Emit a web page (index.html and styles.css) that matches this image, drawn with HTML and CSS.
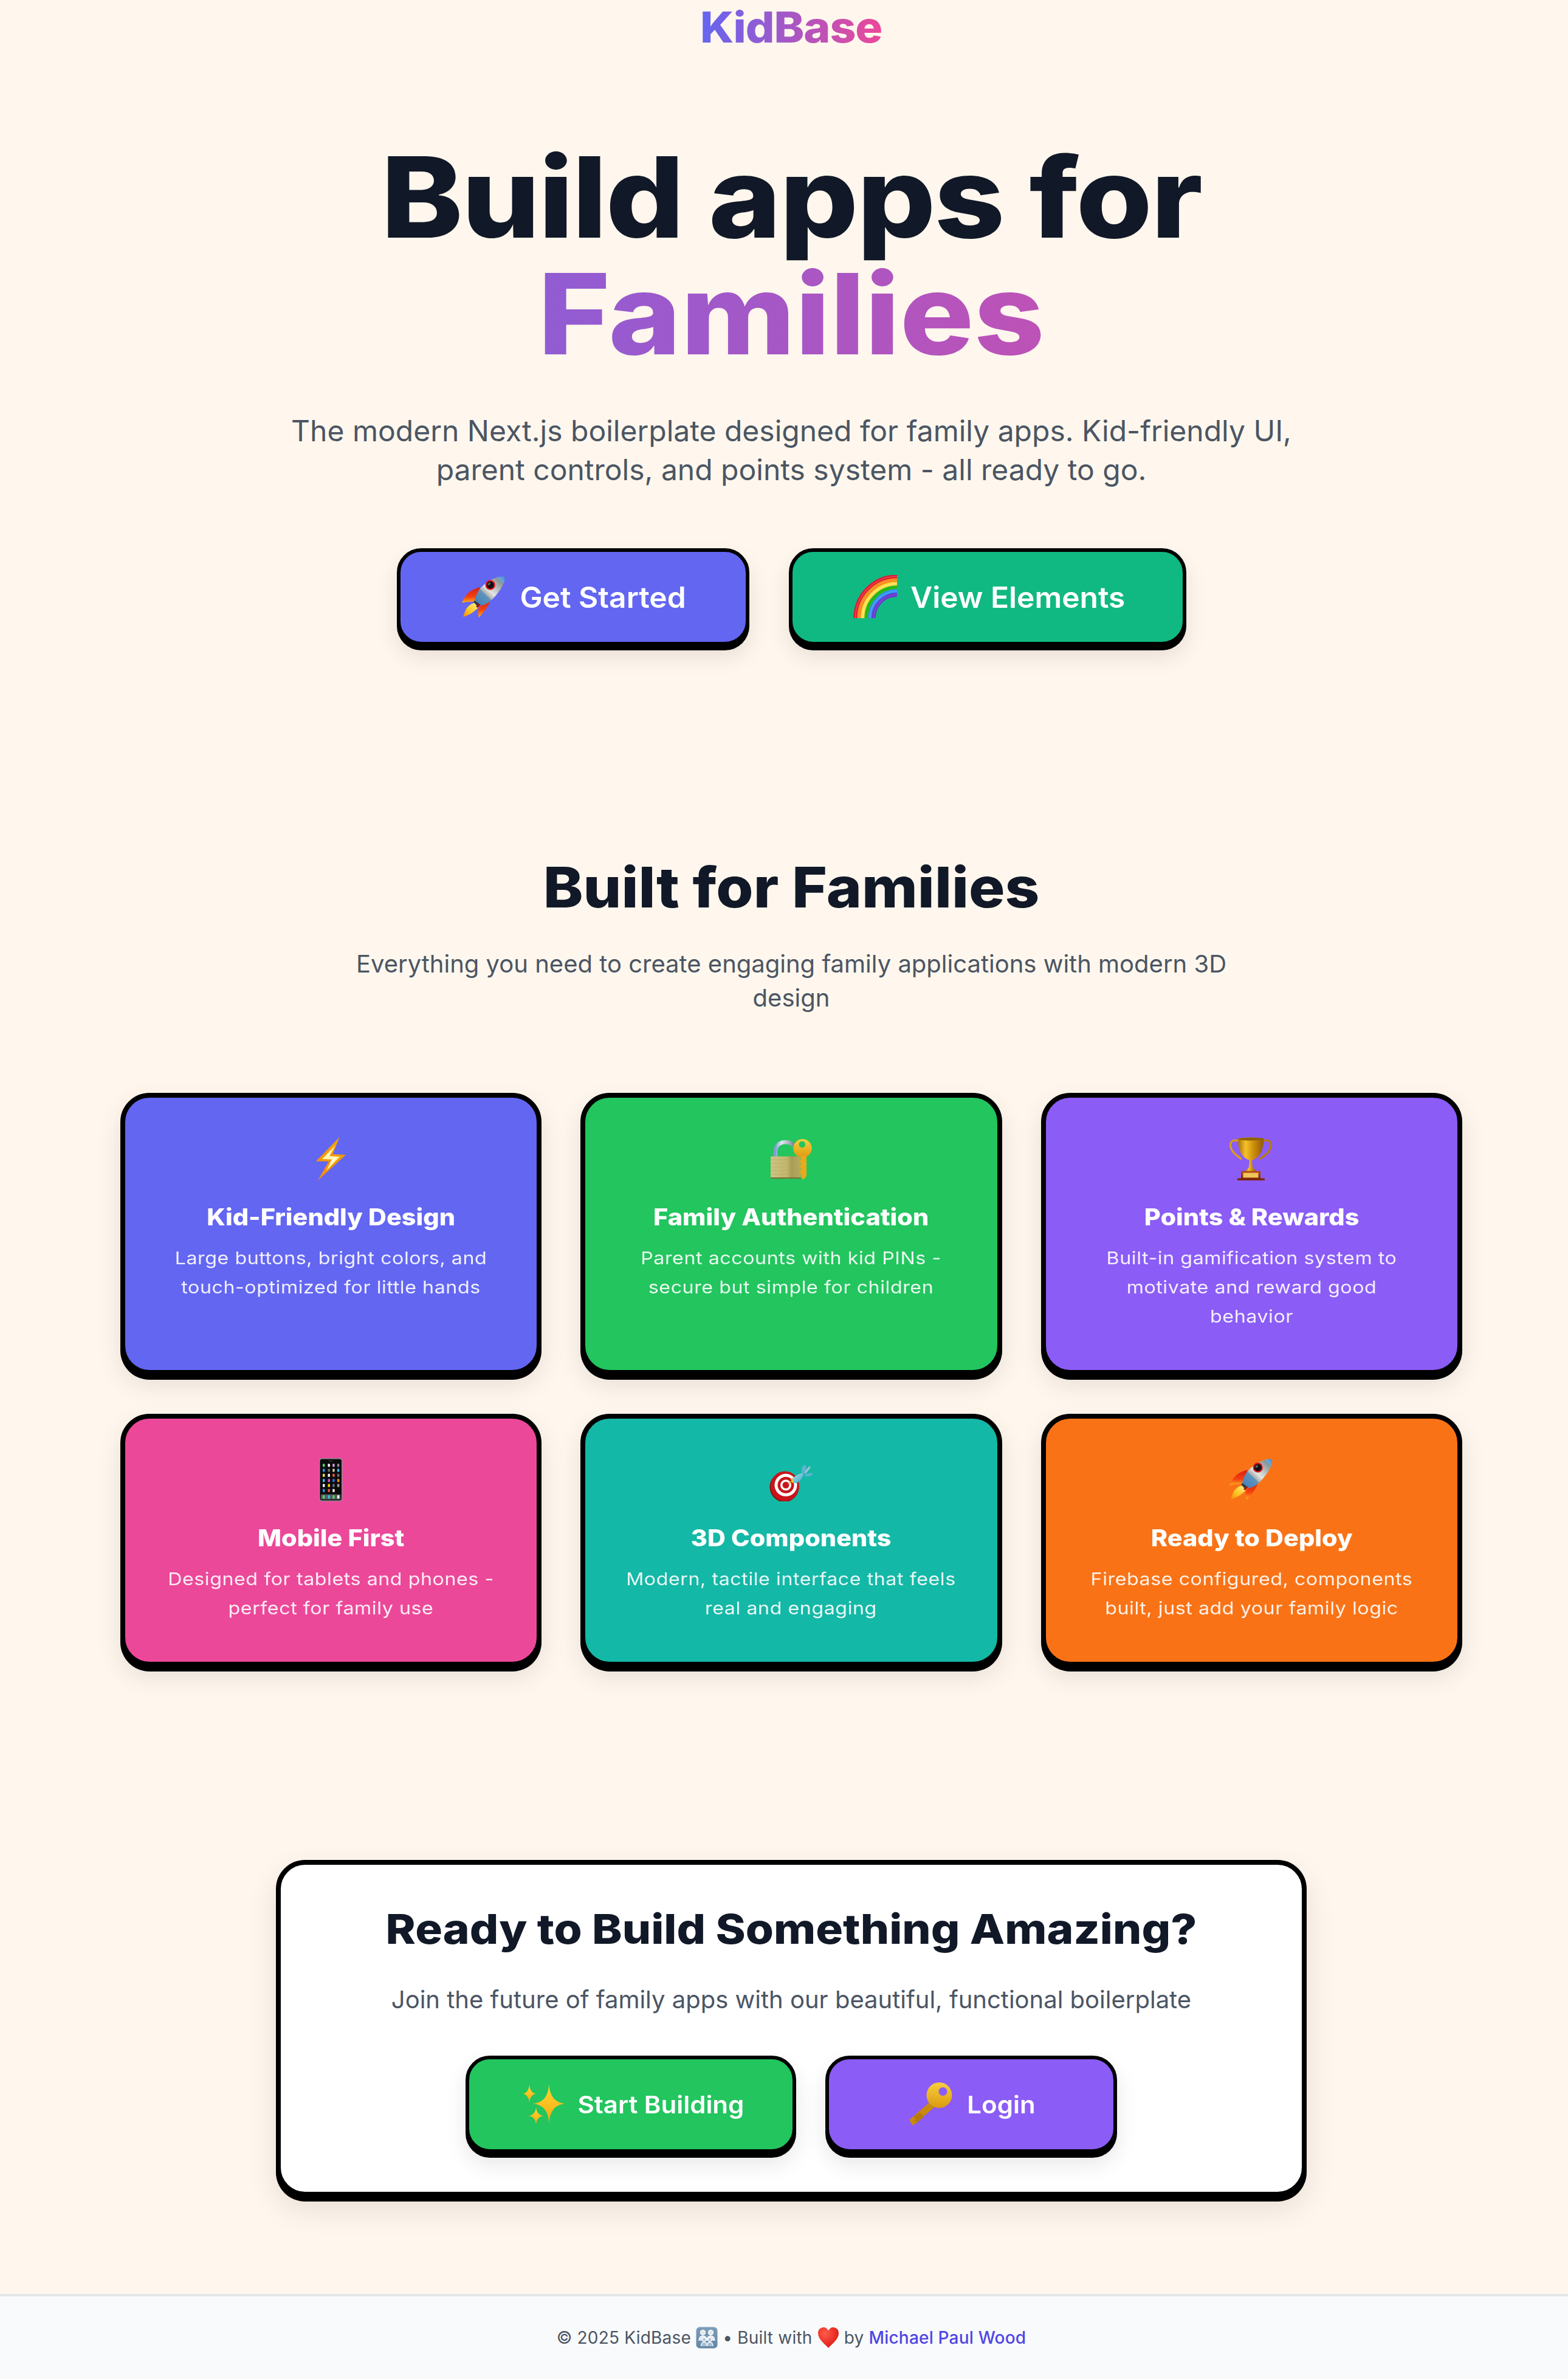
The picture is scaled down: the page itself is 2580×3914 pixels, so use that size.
FILE: index.html
```html
<!DOCTYPE html>
<html lang="en">
<head>
<meta charset="utf-8">
<title>KidBase</title>
<link rel="stylesheet" href="styles.css">
</head>
<body>
<svg class="defs" xmlns="http://www.w3.org/2000/svg" aria-hidden="true">
  <defs>
    <linearGradient id="rkShade" x1="0" y1="1" x2="1" y2="0">
      <stop offset="0" stop-color="#3e7fb8"/><stop offset=".36" stop-color="#5f93bd"/><stop offset=".38" stop-color="#a8aeac"/><stop offset=".5" stop-color="#e3e5e2"/><stop offset=".85" stop-color="#8a9290"/><stop offset=".86" stop-color="#6fa8d8"/><stop offset="1" stop-color="#4d8cc4"/>
    </linearGradient>
    <linearGradient id="rkFin" x1="0" y1="0" x2="0" y2="1">
      <stop offset="0" stop-color="#d81f14"/><stop offset=".6" stop-color="#f5400f"/><stop offset="1" stop-color="#fdb022"/>
    </linearGradient>
    <linearGradient id="rkFire" x1="1" y1="0" x2="0" y2="1">
      <stop offset="0" stop-color="#fff48a"/><stop offset=".6" stop-color="#fdc31f"/><stop offset="1" stop-color="#f5840f"/>
    </linearGradient>
    <linearGradient id="boltFill" x1="0" y1="0" x2="0" y2="1">
      <stop offset="0" stop-color="#f7a20c"/><stop offset="1" stop-color="#f48c06"/>
    </linearGradient>
    <linearGradient id="gold" x1="0" y1="0" x2="1" y2="0">
      <stop offset="0" stop-color="#a86f05"/><stop offset=".3" stop-color="#f3c22c"/><stop offset=".6" stop-color="#cf8f0c"/><stop offset="1" stop-color="#8f5b04"/>
    </linearGradient>
    <linearGradient id="plinth" x1="0" y1="0" x2="0" y2="1">
      <stop offset="0" stop-color="#b3501a"/><stop offset="1" stop-color="#7d2a08"/>
    </linearGradient>
    <linearGradient id="brass" x1="0" y1="0" x2="1" y2="0">
      <stop offset="0" stop-color="#cfc483"/><stop offset=".55" stop-color="#c2b56c"/><stop offset=".7" stop-color="#a89c55"/><stop offset="1" stop-color="#b5a963"/>
    </linearGradient>
    <linearGradient id="steel" x1="0" y1="0" x2="1" y2="0">
      <stop offset="0" stop-color="#7f9fd2"/><stop offset=".3" stop-color="#e3e8f0"/><stop offset=".7" stop-color="#a5acb8"/><stop offset="1" stop-color="#6c7480"/>
    </linearGradient>
    <linearGradient id="keyGold" x1="0" y1="0" x2="0" y2="1">
      <stop offset="0" stop-color="#f7cf3c"/><stop offset="1" stop-color="#dc9a12"/>
    </linearGradient>
    <linearGradient id="dartBlue" x1="0" y1="0" x2="1" y2="1">
      <stop offset="0" stop-color="#a4e4ee"/><stop offset="1" stop-color="#3fa6c8"/>
    </linearGradient>
    <linearGradient id="star" x1="0" y1="0" x2="0" y2="1">
      <stop offset="0" stop-color="#fdd835"/><stop offset="1" stop-color="#f7a80d"/>
    </linearGradient>
    <linearGradient id="famBox" x1="0" y1="0" x2="0" y2="1">
      <stop offset="0" stop-color="#7f9db8"/><stop offset="1" stop-color="#5f86a8"/>
    </linearGradient>
    <radialGradient id="heartFill" cx=".35" cy=".3" r=".8">
      <stop offset="0" stop-color="#ff5a4a"/><stop offset="1" stop-color="#d9140f"/>
    </radialGradient>
  </defs>

  <symbol id="e-rocket" viewBox="0 0 72 72">
    <path d="M30 20 C22 22 16 25 11 29 C6 34 2 40 0 46 C6 44 14 44 22 44Z" fill="url(#rkFin)"/>
    <path d="M41 37 L46 45 C42 53 36 62 28 70 C26 64 26 58 28 54 L36 44Z" fill="url(#rkFin)"/>
    <path d="M22 46 L28 52 C22 60 12 66 2 69 C4 62 6 56 10 52 C14 48 18 46 22 46Z" fill="url(#rkFire)"/>
    <path d="M19 44 L24 40 L30 47 L25 51Z" fill="#33373d"/>
    <path d="M40 37 C36 43 31 49 26 54 L23 52 C28 47 34 41 40 37Z" fill="#a3160f"/>
    <path d="M70 3 C62 1 46 6 31 21 C26 27 22 36 21 42 L32 50 C40 49 46 44 52 38 C64 25 72 12 70 3Z" fill="url(#rkShade)"/>
    <circle cx="46.7" cy="16.5" r="8.2" fill="#e1131f"/>
    <circle cx="46.7" cy="16.5" r="6" fill="#111"/>
    <ellipse cx="44.8" cy="14.8" rx="2.8" ry="1.6" fill="#666" transform="rotate(-40 44.8 14.8)"/>
  </symbol>

  <symbol id="e-rainbow" viewBox="0 0 72 72">
    <g fill="none" stroke-width="6.3">
      <path d="M3.5 71 A68.500 68.500 0 0 1 72 2.500" stroke="#dd1c33"/>
      <path d="M9.500 71 A62.500 62.500 0 0 1 72 8.500" stroke="#f88618"/>
      <path d="M15.500 71 A56.500 56.500 0 0 1 72 14.500" stroke="#fddc4a"/>
      <path d="M21.500 71 A50.500 50.500 0 0 1 72 20.500" stroke="#2fbb1e"/>
      <path d="M27.500 71 A44.500 44.500 0 0 1 72 26.500" stroke="#2e8ff6"/>
      <path d="M33.500 71 A38.500 38.500 0 0 1 72 32.500" stroke="#6a35cc"/>
    </g>
    <g fill="none" stroke-width="1.200" stroke-opacity=".5">
      <path d="M3.500 71 A68.500 68.500 0 0 1 72 2.500" stroke="#ff8a96"/>
      <path d="M9.500 71 A62.500 62.500 0 0 1 72 8.500" stroke="#ffc06a"/>
      <path d="M15.500 71 A56.500 56.500 0 0 1 72 14.500" stroke="#fff3a0"/>
      <path d="M21.500 71 A50.500 50.500 0 0 1 72 20.500" stroke="#119a08"/>
      <path d="M27.500 71 A44.500 44.500 0 0 1 72 26.500" stroke="#86c4ff"/>
      <path d="M33.500 71 A38.500 38.500 0 0 1 72 32.500" stroke="#9f7cf0"/>
    </g>
  </symbol>

  <symbol id="e-bolt" viewBox="0 0 72 72">
    <path d="M49.500 1 L11 40.500 L32 40.700 L14 72 L60 30 L38.500 29Z" fill="url(#boltFill)"/>
    <path d="M43 14 L21 37 L37 37.500 L28 56 L50 33 L33 32Z" fill="#fff6a8"/>
    <path d="M40 20 L28 34 L40 34.500 L34 46 L44 35 L30 34Z" fill="#fff"/>
  </symbol>

  <symbol id="e-trophy" viewBox="0 0 72 72">
    <path d="M15 7 C5 4 0 9 2 17 C4 26 12 31 20 37" fill="none" stroke="#d9a014" stroke-width="3.200"/>
    <path d="M55 7 C65 4 70 9 68 17 C66 26 58 31 50 37" fill="none" stroke="#b47c08" stroke-width="3.200"/>
    <path d="M14 3 C22 1 48 1 56 3 C56 18 53 33 37 39 L33 39 C17 33 14 18 14 3Z" fill="url(#gold)"/>
    <ellipse cx="35" cy="4" rx="20" ry="2.500" fill="#8f6206"/>
    <path d="M33 39 H37 L38 50 C39 53 43 54 44 57 H26 C27 54 31 53 32 50Z" fill="url(#gold)"/>
    <rect x="19" y="56.500" width="32" height="12.500" fill="url(#plinth)"/>
    <rect x="22.500" y="59.500" width="25" height="8" fill="#f0c45a"/>
    <rect x="13" y="68.500" width="45" height="4" rx="1" fill="#7a2606"/>
  </symbol>

  <symbol id="e-lock" viewBox="0 0 72 72">
    <path d="M10 33 V24 C10 14 18 9 27 9 C34 9 39 12 43 18" fill="none" stroke="url(#steel)" stroke-width="6.400"/>
    <rect x="2" y="32.500" width="49" height="36.500" rx="1.500" fill="url(#brass)"/>
    <path d="M2 38 H51 M2 44 H51 M2 50 H51 M2 56 H51 M2 62 H51" stroke="#b4a862" stroke-width=".6"/>
    <rect x="2" y="67" width="49" height="2.200" fill="#7d7239"/>
    <path fill-rule="evenodd" d="M54.500 4 A15.300 15.300 0 1 1 54.500 34.600 A15.300 15.300 0 1 1 54.500 4Z M53.800 7.500 A5.300 5.300 0 1 0 53.800 18.100 A5.300 5.300 0 1 0 53.800 7.500Z" fill="url(#keyGold)"/>
    <path d="M51.500 32 H61 V65 L56 71 L51.500 66 V60 L48 58 L51.500 56 V51 L48 49 L51.500 47 V43 L48 41 L51.500 39Z" fill="#e9a91c"/>
  </symbol>

  <symbol id="e-phone" viewBox="0 0 72 72">
    <rect x="16" y="1" width="38.500" height="71" rx="4.500" fill="#8c8f93"/>
    <rect x="17.500" y="2.500" width="35.500" height="68" rx="3.500" fill="#0b0b0d"/>
    <rect x="31" y="5" width="8" height="1.600" rx=".8" fill="#333"/>
    <g>
      <rect x="22" y="10.200" width="3.400" height="5" rx=".8" fill="#4cd964"/><rect x="30.500" y="10.200" width="3.400" height="5" rx=".8" fill="#fff"/><rect x="38.200" y="10.200" width="3.400" height="5" rx=".8" fill="#d89be6"/><rect x="45.900" y="10.200" width="3.400" height="5" rx=".8" fill="#8e8e93"/>
      <rect x="22" y="18.500" width="3.400" height="5" rx=".8" fill="#1e9bf0"/><rect x="30.500" y="18.500" width="3.400" height="5" rx=".8" fill="#6f6f6f"/><rect x="38.200" y="18.500" width="3.400" height="5" rx=".8" fill="#d8c9a0"/><rect x="45.900" y="18.500" width="3.400" height="5" rx=".8" fill="#34c0eb"/>
      <rect x="22" y="26.800" width="3.400" height="5" rx=".8" fill="#ffe14d"/><rect x="30.500" y="26.800" width="3.400" height="5" rx=".8" fill="#fff"/><rect x="38.200" y="26.800" width="3.400" height="5" rx=".8" fill="#f5563d"/><rect x="45.900" y="26.800" width="3.400" height="5" rx=".8" fill="#6f6f6f"/>
      <rect x="22" y="35.200" width="3.400" height="5" rx=".8" fill="#34c0eb"/><rect x="30.500" y="35.200" width="3.400" height="5" rx=".8" fill="#e84fd0"/><rect x="38.200" y="35.200" width="3.400" height="5" rx=".8" fill="#1e7bf0"/><rect x="45.900" y="35.200" width="3.400" height="5" rx=".8" fill="#ff9500"/>
      <rect x="22" y="43.500" width="3.400" height="5" rx=".8" fill="#fff"/><rect x="30.500" y="43.500" width="3.400" height="5" rx=".8" fill="#ffd60a"/><rect x="38.200" y="43.500" width="3.400" height="5" rx=".8" fill="#6f6f6f"/><rect x="45.900" y="43.500" width="3.400" height="5" rx=".8" fill="#a0a0a0"/>
      <rect x="22" y="51.800" width="3.400" height="5" rx=".8" fill="#1e9bf0"/><rect x="30.500" y="51.800" width="3.400" height="5" rx=".8" fill="#f5563d"/><rect x="38.200" y="51.800" width="3.400" height="5" rx=".8" fill="#fff"/>
    </g>
    <rect x="19" y="60.500" width="32.500" height="8.500" rx="1.500" fill="#55585c"/>
    <rect x="22" y="62" width="3.400" height="5.600" rx=".8" fill="#4cd964"/><rect x="30.500" y="62" width="3.400" height="5.600" rx=".8" fill="#34c0eb"/><rect x="38.200" y="62" width="3.400" height="5.600" rx=".8" fill="#4cd964"/><rect x="45.900" y="62" width="3.400" height="5.600" rx=".8" fill="#f2f2f2"/>
  </symbol>

  <symbol id="e-dart" viewBox="0 0 72 72">
    <ellipse cx="24.500" cy="48.500" rx="24" ry="24.500" fill="#8f0e10"/>
    <ellipse cx="25.500" cy="47" rx="23.500" ry="24.500" fill="#c8151b"/>
    <circle cx="27" cy="45.300" r="18.500" fill="#fff"/>
    <circle cx="27" cy="45.300" r="13.500" fill="#c8151b"/>
    <circle cx="27" cy="45.300" r="9" fill="#fff"/>
    <circle cx="27" cy="45.300" r="5.500" fill="#c8151b"/>
    <path d="M29 44.500 L36 38 L38 40 Z" fill="#d8a318"/>
    <path d="M35 35 L40 32 L42 41 L38 42Z" fill="#f6c92c"/>
    <path d="M38 35 C42 30 50 26 56 25 C56 31 52 38 45 42 L40 42Z" fill="url(#dartBlue)"/>
    <path d="M54 26 C52 20 53 13 58 12 C62 14 62 22 59 27Z" fill="#58b4cf"/>
    <path d="M58 28 C62 25 68 25 72 26 C70 30 64 32 59 31Z" fill="#58b4cf"/>
    <path d="M58 24 L66 14 L68 16 L60 26Z" fill="#a8c6cf"/>
  </symbol>

  <symbol id="e-sparkles" viewBox="0 0 72 72">
    <path d="M45.400 3 Q47 32.500 71.400 35 Q47 37.500 45.400 67 Q43.800 37.500 19.400 35 Q43.800 32.500 45.400 3Z" fill="url(#star)"/>
    <path d="M13 3.200 Q13.900 17 24 18.700 Q13.900 20.400 13 34.200 Q12.100 20.400 2 18.700 Q12.100 17 13 3.200Z" fill="url(#star)"/>
    <path d="M24 40.500 Q24.900 53.300 36 55 Q24.900 56.700 24 69.500 Q23.100 56.700 12 55 Q23.100 53.300 24 40.500Z" fill="url(#star)"/>
  </symbol>

  <symbol id="e-key" viewBox="0 0 72 72">
    <path d="M34 33 L1 62 L7 71 L42 41Z" fill="#c98a0e"/>
    <path d="M8 56 L12 60 L9 63 L14 65 L11 69 L15 66 L18 62 L22 60 L25 55 L18 50Z" fill="#b57a0a"/>
    <path fill-rule="evenodd" d="M50.500 0 A21 21 0 1 1 50.500 42 A21 21 0 1 1 50.500 0Z M56.500 8 A7 7 0 1 0 56.500 22 A7 7 0 1 0 56.500 8Z" fill="url(#keyGold)"/>
  </symbol>

  <symbol id="e-family" viewBox="0 0 72 72">
    <rect x="1" y="1" width="70" height="70" rx="12" fill="url(#famBox)"/>
    <g fill="none" stroke="#fff" stroke-width="2.500">
      <circle cx="23" cy="19" r="8" fill="#dfe8ef"/><circle cx="49" cy="19" r="8" fill="#dfe8ef"/>
      <path d="M10 46 C10 34 16 30 23 30 C30 30 36 34 36 46" fill="#dfe8ef"/><path d="M36 46 C36 34 42 30 49 30 C56 30 62 34 62 46" fill="#dfe8ef"/>
      <circle cx="27" cy="42" r="6" fill="#a9c0d2"/><circle cx="46" cy="42" r="6" fill="#a9c0d2"/>
      <path d="M17 64 C17 54 21 50 27 50 C33 50 37 54 37 64" fill="#a9c0d2"/><path d="M36 64 C36 54 40 50 46 50 C52 50 56 54 56 64" fill="#a9c0d2"/>
    </g>
  </symbol>

  <symbol id="e-heart" viewBox="0 0 72 72">
    <path d="M36 70 C24 56 2 42 2 21 C2 9 11 2 20 2 C27 2 33 6 36 13 C39 6 45 2 52 2 C61 2 70 9 70 21 C70 42 48 56 36 70Z" fill="url(#heartFill)"/>
  </symbol>
</svg>

<div class="page">
  <main class="content">
    <header class="topbar"><span class="logo">KidBase</span></header>

    <section class="hero">
      <h1 class="hero-title">Build apps for <span class="hero-accent">Families</span></h1>
      <p class="hero-sub">The modern Next.js boilerplate designed for family apps. Kid-friendly UI, parent controls, and points system - all ready to go.</p>
      <div class="actions actions-hero">
        <a class="btn btn-large btn-indigo btn-started"><svg class="emoji"><use href="#e-rocket"/></svg><span class="btn-label">Get Started</span></a>
        <a class="btn btn-large btn-emerald btn-elements"><svg class="emoji"><use href="#e-rainbow"/></svg><span class="btn-label">View Elements</span></a>
      </div>
    </section>

    <section class="features">
      <h2 class="features-title">Built for Families</h2>
      <p class="features-sub">Everything you need to create engaging family applications with modern 3D design</p>
      <div class="card-grid">
        <article class="card card-indigo"><svg class="emoji card-icon"><use href="#e-bolt"/></svg><h3 class="card-title">Kid-Friendly Design</h3><p class="card-text">Large buttons, bright colors, and touch-optimized for little hands</p></article>
        <article class="card card-green"><svg class="emoji card-icon"><use href="#e-lock"/></svg><h3 class="card-title">Family Authentication</h3><p class="card-text">Parent accounts with kid PINs - secure but simple for children</p></article>
        <article class="card card-purple"><svg class="emoji card-icon"><use href="#e-trophy"/></svg><h3 class="card-title">Points &amp; Rewards</h3><p class="card-text">Built-in gamification system to motivate and reward good behavior</p></article>
        <article class="card card-pink"><svg class="emoji card-icon"><use href="#e-phone"/></svg><h3 class="card-title">Mobile First</h3><p class="card-text">Designed for tablets and phones - perfect for family use</p></article>
        <article class="card card-teal"><svg class="emoji card-icon"><use href="#e-dart"/></svg><h3 class="card-title">3D Components</h3><p class="card-text">Modern, tactile interface that feels real and engaging</p></article>
        <article class="card card-orange"><svg class="emoji card-icon"><use href="#e-rocket"/></svg><h3 class="card-title">Ready to Deploy</h3><p class="card-text">Firebase configured, components built, just add your family logic</p></article>
      </div>
    </section>

    <section class="cta">
      <h2 class="cta-title">Ready to Build Something Amazing?</h2>
      <p class="cta-sub">Join the future of family apps with our beautiful, functional boilerplate</p>
      <div class="actions actions-cta">
        <a class="btn btn-small btn-green btn-building"><svg class="emoji"><use href="#e-sparkles"/></svg><span class="btn-label">Start Building</span></a>
        <a class="btn btn-small btn-purple btn-login"><svg class="emoji"><use href="#e-key"/></svg><span class="btn-label">Login</span></a>
      </div>
    </section>
  </main>

  <footer class="footer">
    <p class="footer-text">© 2025 KidBase <svg class="emoji-inline"><use href="#e-family"/></svg> • Built with <svg class="emoji-inline"><use href="#e-heart"/></svg> by <a class="footer-link">Michael Paul Wood</a></p>
  </footer>
</div>
</body>
</html>
```

FILE: styles.css
```css
html, body {
  margin: 0;
  padding: 0;
  background: #fff7ed;
}

body {
  font-family: "Inter", "Liberation Sans", sans-serif;
  color: #111827;
}

.defs {
  position: absolute;
  width: 0;
  height: 0;
}

.content {
  padding-left: 24px;
}

.topbar {
  padding-top: 5px;
  height: 80px;
  text-align: center;
}

.logo {
  display: inline-block;
  font-size: 70px;
  line-height: 80px;
  font-weight: 800;
  letter-spacing: -1px;
  transform: scaleX(1.072);
  background: linear-gradient(90deg, #6366f1, #ec4899);
  -webkit-background-clip: text;
  background-clip: text;
  color: transparent;
}

.hero {
  text-align: center;
}

.hero-title {
  width: 2300px;
  margin: 143px auto 65px;
  font-size: 184px;
  line-height: 192px;
  font-weight: 800;
  letter-spacing: -2px;
  transform: scaleX(1.102);
  color: #111827;
}

.hero-accent {
  display: block;
  letter-spacing: 0;
  background: linear-gradient(90deg, #6366f1, #ec4899);
  -webkit-background-clip: text;
  background-clip: text;
  color: transparent;
}

.hero-sub {
  width: 1792px;
  margin: 0 auto 97px;
  font-size: 48px;
  line-height: 64px;
  color: #4b5563;
}

.actions {
  display: flex;
  justify-content: center;
}

.actions-hero {
  gap: 65px;
}

.actions-cta {
  gap: 48px;
}

.btn {
  box-sizing: border-box;
  display: flex;
  align-items: center;
  justify-content: center;
  height: 160px;
  border: 6px solid #000;
  border-radius: 40px;
  color: #fff;
  box-shadow: 0 8px 0 #000, 0 18px 36px rgba(0, 0, 0, 0.1);
  font-weight: 600;
}

.btn-large {
  gap: 28px;
  font-size: 48px;
}

.btn-large .btn-label {
  transform: scaleX(1.035);
}

.btn-small {
  gap: 27px;
  font-size: 40px;
}

.btn-small .btn-label {
  transform: scaleX(1.05);
}

.btn-started { width: 580px; }
.btn-elements { width: 654px; }
.btn-building { width: 544px; }
.btn-login { width: 480px; }

.btn-indigo { background: #6366f1; }
.btn-emerald { background: #10b981; }
.btn-green { background: #22c55e; }
.btn-purple { background: #8b5cf6; }

.emoji {
  display: block;
  width: 72px;
  height: 72px;
  flex: none;
}

.features {
  margin-top: 342px;
  text-align: center;
}

.features-title {
  width: 1600px;
  margin: 0 auto 42px;
  font-size: 92px;
  line-height: 112px;
  font-weight: 800;
  transform: scaleX(1.077);
}

.features-sub {
  width: 1536px;
  margin: 0 auto 128px;
  font-size: 40px;
  line-height: 56px;
  color: #4b5563;
}

.card-grid {
  display: grid;
  grid-template-columns: repeat(3, 1fr);
  gap: 64px;
  width: 2208px;
  margin: 0 auto;
}

.card {
  box-sizing: border-box;
  padding: 64px 48px;
  border: 8px solid #000;
  border-radius: 48px;
  color: #fff;
  box-shadow: 0 8px 0 #000, 0 16px 40px rgba(0, 0, 0, 0.1);
}

.card-indigo { background: #6366f1; }
.card-green { background: #22c55e; }
.card-purple { background: #8b5cf6; }
.card-pink { background: #ec4899; }
.card-teal { background: #14b8a6; }
.card-orange { background: #f97316; }

.card-icon {
  margin: 0 auto 32px;
}

.card-title {
  margin: 0 0 16px;
  font-size: 38px;
  line-height: 56px;
  font-weight: 800;
  transform: scaleX(1.09);
}

.card-text {
  width: 493px;
  margin: 0 auto;
  font-size: 29px;
  line-height: 48px;
  font-weight: 400;
  letter-spacing: 0.5px;
  transform: scaleX(1.11);
  color: rgba(255, 255, 255, 0.9);
}

.cta {
  box-sizing: border-box;
  width: 1696px;
  margin: 318px auto 160px;
  padding: 62px 64px 64px;
  border: 8px solid #000;
  border-radius: 48px;
  background: #fff;
  text-align: center;
  box-shadow: 0 8px 0 #000, 0 20px 50px rgba(0, 0, 0, 0.1);
}

.cta-title {
  margin: 0 0 46px;
  font-size: 68px;
  line-height: 86px;
  font-weight: 800;
  transform: scaleX(1.098);
}

.cta-sub {
  margin: 0 0 64px;
  font-size: 40px;
  line-height: 56px;
  color: #4b5563;
}

.footer {
  padding: 48px 0 48px 24px;
  border-top: 4px solid #e5e7eb;
  background: #f9fafb;
  text-align: center;
}

.footer-text {
  margin: 0;
  font-size: 28px;
  line-height: 40px;
  letter-spacing: 0.2px;
  color: #4b5563;
}

.emoji-inline {
  width: 36px;
  height: 36px;
  vertical-align: -8px;
}

.footer-link {
  font-weight: 500;
  color: #4f46e5;
}
```
